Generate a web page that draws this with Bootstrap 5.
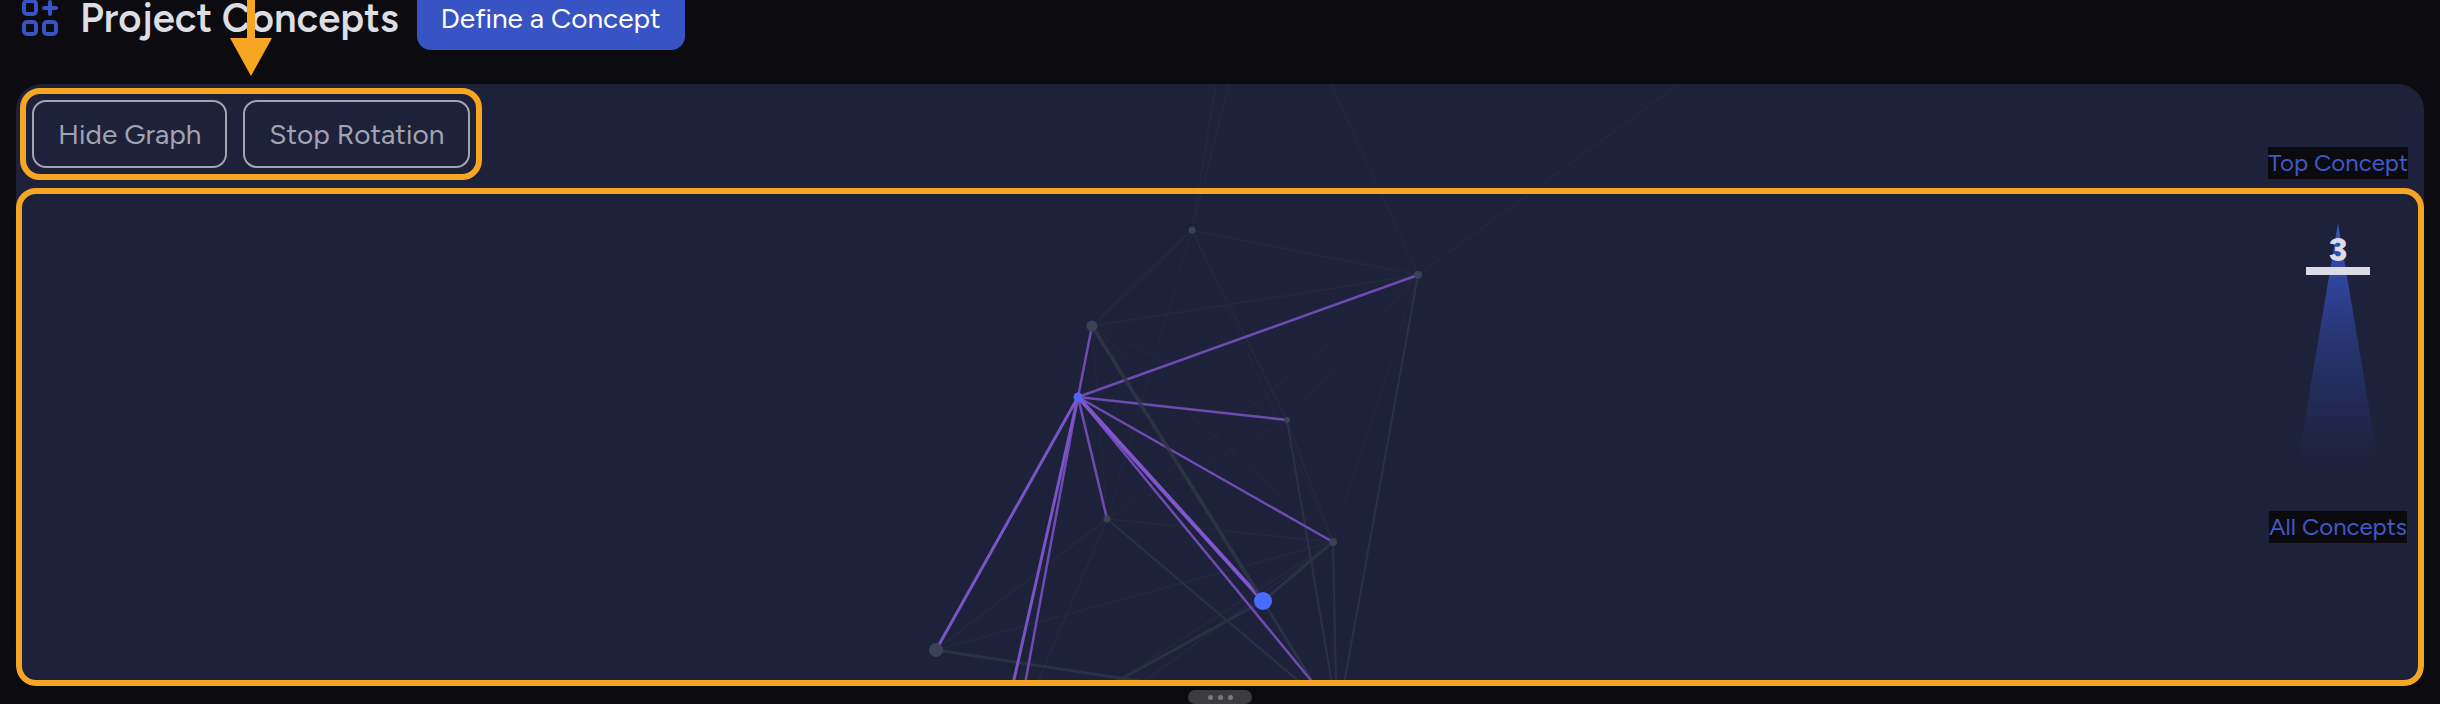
<!DOCTYPE html>
<html lang="en">
<head>
<meta charset="utf-8">
<meta name="viewport" content="width=device-width, initial-scale=1">
<title>Project Concepts</title>
<link href="https://cdn.jsdelivr.net/npm/bootstrap@5.3.0/dist/css/bootstrap.min.css" rel="stylesheet">
<style>
  body { background: #0c0c10; font-family: Figtree, Lato, sans-serif; height: 100vh; }
  .page-head { margin-top: -14px; padding-bottom: 34px; padding-left: 22px; }
  .page-head svg { margin-right: 22px; }
  .page-title { color: #dddde4; font-size: 40px; line-height: 36px; font-weight: 600; margin: 0 18px 0 0; }
  .btn { font-size: 28px; line-height: 40px; border-radius: 14px; white-space: nowrap; border-width: 2px; }
  .btn-define { --bs-btn-color: #fff; --bs-btn-bg: #3853c4; --bs-btn-border-color: #3853c4; --bs-btn-hover-color: #fff; --bs-btn-hover-bg: #4561d6; padding: 10px 22px; }
  .btn-tool { --bs-btn-color: #a3a4b1; --bs-btn-border-color: #a3a4b1; --bs-btn-hover-color: #fff; --bs-btn-hover-border-color: #fff; padding: 12px 24px; }
  .pointer-arrow { position: absolute; top: 0; left: 230px; z-index: 3; pointer-events: none; }
  .graph-panel { background: #1e213a; border-radius: 26px 26px 20px 20px; margin: 0 16px; overflow: hidden; }
  .graph-canvas { position: absolute; inset: 0; width: 100%; height: 100%; }
  .outlined { border: 6px solid #f6a623; border-radius: 20px; }
  .toolset { margin: 4px 4px 8px; padding: 6px; gap: 16px; }
  .level-scale { position: absolute; top: 63px; right: 16px; }
  .level-scale a { background: #0b0b0f; color: #4059c8; font-size: 24px; line-height: 32px; text-decoration: none; }
  .cone { margin: 44px 0 50px; }
  .cone-level { position: absolute; top: 10px; left: 8px; right: 8px; border-bottom: 8px solid #dcdce6; color: #dcdce6; font-size: 33px; line-height: 34px; font-weight: 800; text-align: center; }
  .drag-handle { background: #3b3b40; width: 64px; height: 14px; border-radius: 8px; margin: 4px auto 0; gap: 5px; padding: 0; border: 0; }
  .drag-handle span { width: 5px; height: 5px; border-radius: 50%; background: #77777c; }
</style>
</head>
<body class="d-flex flex-column overflow-hidden position-relative">
  <header class="page-head d-flex align-items-center">
    <svg width="36" height="36" viewBox="0 0 36 36" fill="none" stroke="#3853c4" stroke-width="4" aria-hidden="true">
      <rect x="2" y="1" width="12" height="13" rx="3"/>
      <rect x="2" y="22" width="12" height="12" rx="3"/>
      <rect x="22" y="22" width="12" height="12" rx="3"/>
      <path d="M28 2v12M22 8h12" stroke-linecap="round"/>
    </svg>
    <h1 class="page-title">Project Concepts</h1>
    <button type="button" class="btn btn-define">Define a Concept</button>
  </header>

  <svg class="pointer-arrow" width="42" height="76" viewBox="0 0 42 76" fill="#f6a623" aria-hidden="true">
    <path d="M17 0h8v38h17L21 76 0 38h17z"/>
  </svg>

  <main class="graph-panel position-relative d-flex flex-column flex-grow-1">
    <svg class="graph-canvas" viewBox="16 84 2408 602" preserveAspectRatio="xMidYMin slice" role="img" aria-label="Concept graph">
      <g stroke="#2a3142" stroke-width="2" stroke-opacity=".4" fill="none">
        <path d="M1192 230L1216 84M1192 230L1229 84M1418 275L1331 84M1418 275L1679 84" stroke-opacity=".3"/>
        <path d="M1192 230L1092 326M1192 230L1418 275M1092 326L1418 275M1192 230L1287 420"/>
        <path d="M1192 230L1107 519M1192 230L1333 542M1092 326L1287 420M1092 326L1333 542M1092 326L1107 519M1418 275L1107 519M1418 275L1287 420M1418 275L1333 542M1287 420L1107 519" stroke-opacity=".25"/>
        <path d="M936 650L1107 519M936 650L1333 542M1107 519L1333 542M1107 519L1037 684M1287 420L1333 542M1333 542L1118 680M1333 542L1146 680"/>
      </g>
      <g stroke="#2a3142" stroke-width="2" fill="none">
        <path d="M1418 275L1344 684M1333 542L1336 684M1287 420L1332 684M1107 519L1302 684"/>
        <path d="M1092 326L1263 601L1314 684M1333 542L1263 601L1112 684M936 650L1146 682" stroke-width="3"/>
      </g>
      <g stroke="#6d4bb2" stroke-width="2.500" fill="none">
        <path d="M1078 397L1092 326M1078 397L1418 275M1078 397L1287 420M1078 397L1333 542M1078 397L1107 519M1078 397L1025 684M1078 397L1314 684"/>
        <path d="M1078 397L936 650M1078 397L1013 684" stroke="#7a54c7" stroke-width="3"/>
        <path d="M1078 397L1263 601" stroke="#7f56ce" stroke-width="4"/>
      </g>
      <path d="M1092 326L1263 601" stroke="#2d3544" stroke-width="4" stroke-opacity=".7"/>
      <g fill="#3a4255">
        <circle cx="1192" cy="230" r="3.500"/><circle cx="1418" cy="275" r="4"/><circle cx="1092" cy="326" r="5.500"/>
        <circle cx="1287" cy="420" r="3"/><circle cx="1107" cy="519" r="3.500"/><circle cx="1333" cy="542" r="4"/><circle cx="936" cy="650" r="7"/>
      </g>
      <circle cx="1078" cy="397" r="4.500" fill="#4c68f5"/>
      <circle cx="1263" cy="601" r="9" fill="#4a6bff"/>
    </svg>

    <div class="toolset outlined d-flex align-self-start position-relative">
      <button type="button" class="btn btn-tool">Hide Graph</button>
      <button type="button" class="btn btn-tool">Stop Rotation</button>
    </div>
    <section class="outlined flex-grow-1 position-relative" aria-label="Graph view"></section>

    <aside class="level-scale d-flex flex-column align-items-center">
      <a href="#top">Top Concept</a>
      <div class="cone position-relative">
        <svg class="d-block" width="80" height="238" viewBox="0 0 80 238" aria-hidden="true">
          <defs><linearGradient id="fade" x1="0" y1="0" x2="0" y2="1"><stop offset="0" stop-color="#3853c4"/><stop offset=".5" stop-color="#3450bd" stop-opacity=".42"/><stop offset="1" stop-color="#2a45b8" stop-opacity="0"/></linearGradient></defs>
          <path d="M40 0L80 238H0z" fill="url(#fade)"/>
        </svg>
        <div class="cone-level">3</div>
      </div>
      <a href="#all">All Concepts</a>
    </aside>
  </main>

  <button type="button" class="drag-handle d-flex flex-shrink-0 align-items-center justify-content-center" aria-label="Resize panel"><span></span><span></span><span></span></button>
<script src="https://cdn.jsdelivr.net/npm/bootstrap@5.3.0/dist/js/bootstrap.bundle.min.js"></script>
</body>
</html>
